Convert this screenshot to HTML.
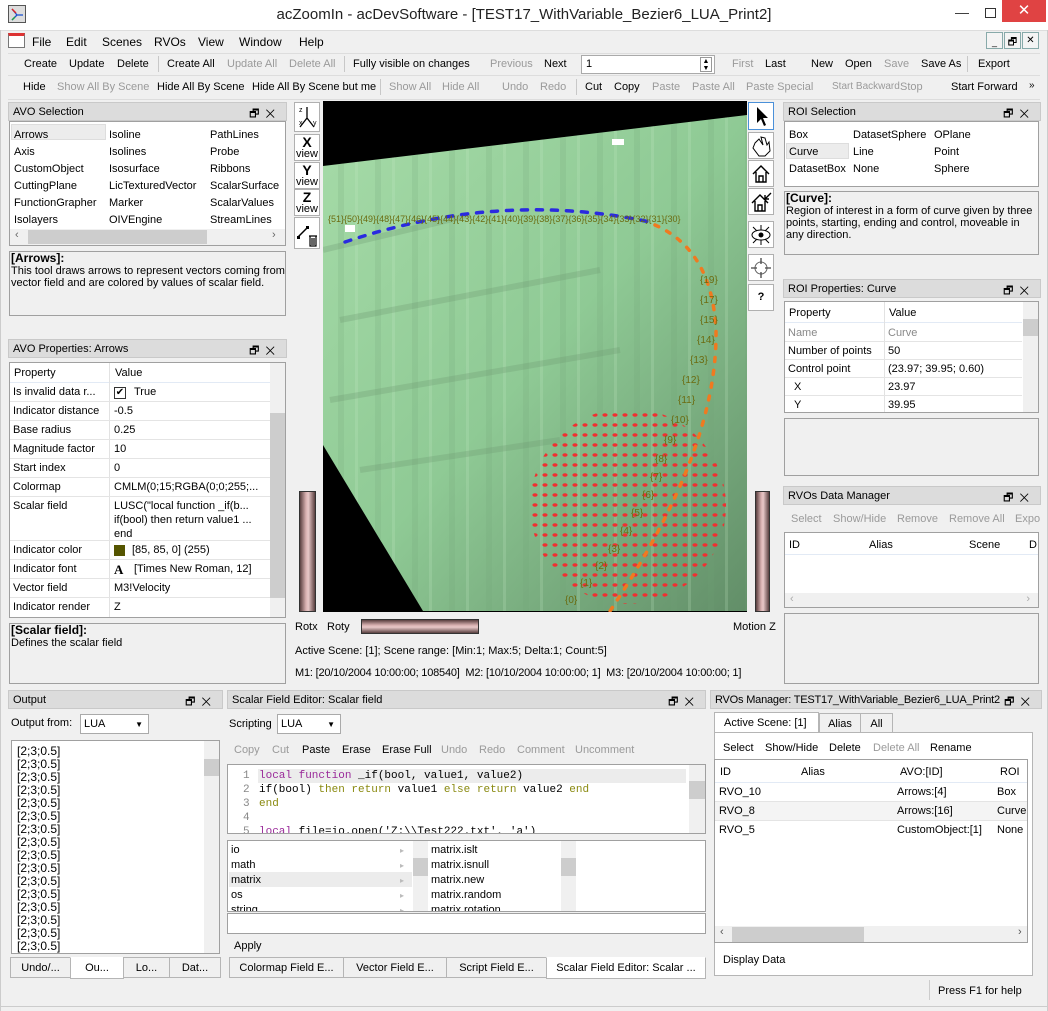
<!DOCTYPE html>
<html><head><meta charset="utf-8"><style>
*{box-sizing:border-box;margin:0;padding:0}
body{width:1048px;height:1011px;overflow:hidden;background:#f0f0f0;font-family:"Liberation Sans",sans-serif;font-size:11px;color:#000;position:relative}
.a{position:absolute;white-space:nowrap}
.g{color:#9a9a9a}
.hd{position:absolute;height:19px;background:#dcdcdc;border:1px solid #c9c9c9;padding:3px 4px;font-size:11px;white-space:nowrap;overflow:hidden}
.hd .ic{position:absolute;right:5px;top:2px;font-size:11px;letter-spacing:6px;background:#dcdcdc}
.bx{position:absolute;background:#fff;border:1px solid #a0a0a0}
.gb{position:absolute;background:#f0f0f0;border:1px solid #a0a0a0}
.btn{position:absolute;width:26px;height:28px;background:#fff;border:1px solid #b0b0b0}
.tab{position:absolute;height:21px;border:1px solid #b5b5b5;background:#f0f0f0;text-align:center;padding-top:4px;white-space:nowrap;overflow:hidden}
.sep{position:absolute;width:1px;height:16px;background:#c8c8c8}
</style></head><body>
<div class="a" style="left:0;top:0;width:1048px;height:30px;background:#fff"></div>
<div class="a" style="left:8px;top:5px;width:18px;height:18px;border:1px solid #555;background:#ddd"></div>
<svg class="a" style="left:9px;top:6px" width="16" height="16"><path d="M3 3 L8 9 L14 9 M8 9 L3 14" stroke="#1a4fd0" stroke-width="1.3" fill="none"/><path d="M3 3 L7 7" stroke="#e02020" stroke-width="1.3"/><path d="M3 14 L6 11" stroke="#20a040" stroke-width="1.3"/></svg>
<div class="a" style="left:0;width:1048px;top:6px;text-align:center;font-size:15px;color:#222">acZoomIn - acDevSoftware - [TEST17_WithVariable_Bezier6_LUA_Print2]</div>
<div class="a" style="left:955px;top:4px;font-size:14px;color:#333">—</div>
<div class="a" style="left:985px;top:8px;width:11px;height:10px;border:1px solid #333"></div>
<div class="a" style="left:1002px;top:0;width:44px;height:22px;background:#e04343;color:#fff;text-align:center;font-size:15px;padding-top:1px">✕</div>
<div class="a" style="left:0;top:30px;width:1048px;height:1px;background:#ddd"></div>
<div class="a" style="left:8px;top:33px;width:17px;height:15px;background:#fff;border:1px solid #777;border-top:3px solid #d33"></div>
<div class="a" style="left:32px;top:35px;font-size:12px">File</div><div class="a" style="left:66px;top:35px;font-size:12px">Edit</div><div class="a" style="left:102px;top:35px;font-size:12px">Scenes</div><div class="a" style="left:154px;top:35px;font-size:12px">RVOs</div><div class="a" style="left:198px;top:35px;font-size:12px">View</div><div class="a" style="left:239px;top:35px;font-size:12px">Window</div><div class="a" style="left:299px;top:35px;font-size:12px">Help</div>
<div class="a" style="left:986px;top:32px;width:17px;height:17px;border:1px solid #8aa;background:#f4f4f4;font-size:9px;text-align:center;padding-top:4px">_</div>
<div class="a" style="left:1004px;top:32px;width:17px;height:17px;border:1px solid #8aa;background:#f4f4f4;font-size:10px;text-align:center;padding-top:2px">🗗</div>
<div class="a" style="left:1022px;top:32px;width:17px;height:17px;border:1px solid #8aa;background:#f4f4f4;font-size:10px;text-align:center;padding-top:2px">✕</div>
<div class="a" style="left:8px;top:53px;width:1032px;height:1px;background:#ddd"></div>
<div class="a" style="left:24px;top:58px">Create</div><div class="a" style="left:69px;top:58px">Update</div><div class="a" style="left:117px;top:58px">Delete</div><div class="sep" style="left:158px;top:56px"></div>
<div class="a" style="left:167px;top:58px">Create All</div><div class="a g" style="left:227px;top:58px">Update All</div><div class="a g" style="left:289px;top:58px">Delete All</div><div class="sep" style="left:344px;top:56px"></div>
<div class="a" style="left:353px;top:58px">Fully visible on changes</div>
<div class="a g" style="left:490px;top:58px">Previous</div><div class="a" style="left:544px;top:58px">Next</div>
<div class="a" style="left:581px;top:55px;width:134px;height:19px;background:#fff;border:1px solid #aaa;padding:2px 4px">1</div>
<div class="a" style="left:700px;top:57px;width:12px;height:15px;border:1px solid #999;font-size:7px;line-height:7px;text-align:center">▲<br>▼</div>
<div class="a g" style="left:732px;top:58px">First</div><div class="a" style="left:765px;top:58px">Last</div>
<div class="a" style="left:811px;top:58px">New</div><div class="a" style="left:845px;top:58px">Open</div><div class="a g" style="left:884px;top:58px">Save</div><div class="a" style="left:921px;top:58px">Save As</div><div class="sep" style="left:967px;top:56px"></div><div class="a" style="left:978px;top:58px">Export</div>
<div class="a" style="left:8px;top:75px;width:1032px;height:1px;background:#ddd"></div>
<div class="a" style="left:23px;top:81px">Hide</div><div class="a g" style="left:57px;top:81px">Show All By Scene</div><div class="a" style="left:157px;top:81px">Hide All By Scene</div><div class="a" style="left:252px;top:81px">Hide All By Scene but me</div><div class="sep" style="left:380px;top:79px"></div>
<div class="a g" style="left:389px;top:81px">Show All</div><div class="a g" style="left:442px;top:81px">Hide All</div>
<div class="a g" style="left:502px;top:81px">Undo</div><div class="a g" style="left:540px;top:81px">Redo</div><div class="sep" style="left:576px;top:79px"></div>
<div class="a" style="left:585px;top:81px">Cut</div><div class="a" style="left:614px;top:81px">Copy</div><div class="a g" style="left:652px;top:81px">Paste</div><div class="a g" style="left:692px;top:81px">Paste All</div><div class="a g" style="left:746px;top:81px">Paste Special</div>
<div class="a g" style="left:832px;top:81px;font-size:10px">Start Backward</div><div class="a g" style="left:900px;top:81px">Stop</div><div class="a" style="left:951px;top:81px">Start Forward</div><div class="a" style="left:1029px;top:80px;font-size:10px">»</div>
<div class="a" style="left:8px;top:99px;width:1032px;height:1px;background:#ddd"></div>

<div class="hd" style="left:8px;top:102px;width:279px">AVO Selection<span class="ic">🗗✕</span></div>
<div class="bx" style="left:9px;top:121px;width:277px;height:125px"></div>
<div class="a" style="left:11px;top:124px;width:95px;height:16px;background:#ececec;border:1px solid #ddd"></div>
<div class="a" style="left:14px;top:127px;line-height:17px">Arrows<br>Axis<br>CustomObject<br>CuttingPlane<br>FunctionGrapher<br>Isolayers</div>
<div class="a" style="left:109px;top:127px;line-height:17px">Isoline<br>Isolines<br>Isosurface<br>LicTexturedVector<br>Marker<br>OIVEngine</div>
<div class="a" style="left:210px;top:127px;line-height:17px">PathLines<br>Probe<br>Ribbons<br>ScalarSurface<br>ScalarValues<br>StreamLines</div>
<div class="a" style="left:10px;top:229px;width:275px;height:16px;background:#f0f0f0"></div>
<div class="a" style="left:28px;top:230px;width:179px;height:14px;background:#cdcdcd"></div>
<div class="a" style="left:15px;top:229px;color:#666">‹</div><div class="a" style="left:272px;top:229px;color:#666">›</div>
<div class="gb" style="left:9px;top:251px;width:277px;height:65px;padding:0 0 0 1px;line-height:12px;font-size:11px"><b style="font-size:12px">[Arrows]:</b><br>This tool draws arrows to represent vectors coming from vector field and are colored by values of scalar field.</div>

<div class="hd" style="left:8px;top:339px;width:279px">AVO Properties: Arrows<span class="ic">🗗✕</span></div>
<div class="bx" style="left:9px;top:362px;width:277px;height:256px;overflow:hidden">
 <div class="a" style="left:0;top:0;width:260px;height:20px;border-bottom:1px solid #e2eaf5"><span class="a" style="left:4px;top:4px">Property</span><span class="a" style="left:105px;top:4px">Value</span></div>
 <div class="a" style="left:99px;top:0;width:1px;height:256px;background:#e2e2e2"></div>
 <div class="a" style="left:0;top:20px;width:260px;line-height:19px">
  <div style="height:19px;border-bottom:1px solid #e4e4e4;padding-left:3px;position:relative">Is invalid data r...<span class="a" style="left:104px;top:4px;width:12px;height:12px;border:1px solid #333;font-size:10px;line-height:10px;text-align:center">✔</span><span class="a" style="left:124px;top:0">True</span></div>
  <div style="height:19px;border-bottom:1px solid #e4e4e4;padding-left:3px;position:relative">Indicator distance<span class="a" style="left:104px">-0.5</span></div>
  <div style="height:19px;border-bottom:1px solid #e4e4e4;padding-left:3px;position:relative">Base radius<span class="a" style="left:104px">0.25</span></div>
  <div style="height:19px;border-bottom:1px solid #e4e4e4;padding-left:3px;position:relative">Magnitude factor<span class="a" style="left:104px">10</span></div>
  <div style="height:19px;border-bottom:1px solid #e4e4e4;padding-left:3px;position:relative">Start index<span class="a" style="left:104px">0</span></div>
  <div style="height:19px;border-bottom:1px solid #e4e4e4;padding-left:3px;position:relative">Colormap<span class="a" style="left:104px">CMLM(0;15;RGBA(0;0;255;...</span></div>
  <div style="height:44px;border-bottom:1px solid #e4e4e4;padding-left:3px;position:relative;line-height:14px;padding-top:2px">Scalar field<span class="a" style="left:104px;top:2px">LUSC("local function _if(b...<br>if(bool) then return value1 ...<br>end</span></div>
  <div style="height:19px;border-bottom:1px solid #e4e4e4;padding-left:3px;position:relative">Indicator color<span class="a" style="left:104px;top:4px;width:11px;height:11px;background:#555500"></span><span class="a" style="left:122px">[85, 85, 0] (255)</span></div>
  <div style="height:19px;border-bottom:1px solid #e4e4e4;padding-left:3px;position:relative">Indicator font<span class="a" style="left:104px;font-family:'Liberation Serif',serif;font-weight:bold;font-size:13px">A</span><span class="a" style="left:124px">[Times New Roman, 12]</span></div>
  <div style="height:19px;border-bottom:1px solid #e4e4e4;padding-left:3px;position:relative">Vector field<span class="a" style="left:104px">M3!Velocity</span></div>
  <div style="height:19px;padding-left:3px;position:relative">Indicator render<span class="a" style="left:104px">Z</span></div>
 </div>
 <div class="a" style="left:260px;top:0;width:16px;height:256px;background:#f0f0f0"></div>
 <div class="a" style="left:260px;top:50px;width:16px;height:185px;background:#cdcdcd"></div>
</div>
<div class="gb" style="left:9px;top:623px;width:277px;height:61px;padding-left:1px;line-height:12px;font-size:11px"><b style="font-size:12px">[Scalar field]:</b><br>Defines the scalar field</div>

<div class="btn" style="left:294px;top:102px;height:30px"><svg width="24" height="28"><text x="4" y="9" font-size="7" font-family="Liberation Sans">z</text><text x="4" y="22" font-size="7">x</text><text x="18" y="22" font-size="7">y</text><path d="M12 4V15L5 24M12 15L19 24" stroke="#000" stroke-width="1.3" fill="none"/></svg></div>
<div class="btn" style="left:294px;top:134px;height:27px;text-align:center;line-height:10px;font-size:11px;padding-top:2px"><b style="font-size:14px">X</b><br>view</div>
<div class="btn" style="left:294px;top:162px;height:27px;text-align:center;line-height:10px;font-size:11px;padding-top:2px"><b style="font-size:14px">Y</b><br>view</div>
<div class="btn" style="left:294px;top:189px;height:27px;text-align:center;line-height:10px;font-size:11px;padding-top:2px"><b style="font-size:14px">Z</b><br>view</div>
<div class="btn" style="left:294px;top:217px;height:32px"><svg width="24" height="30"><path d="M3 19L12 10" stroke="#000" stroke-width="1.5"/><rect x="2" y="18" width="3" height="3"/><rect x="11" y="8" width="3" height="3"/><path d="M14 18h8M15 18v10h6v-10M17 20v7M19 20v7" stroke="#000" fill="none" stroke-width="1.2"/></svg></div>
<div class="a" style="left:299px;top:491px;width:17px;height:121px;background:linear-gradient(90deg,#5a4040,#d8b0b0 40%,#e8c8c8 55%,#5a4040);border:1px solid #333"></div>

<svg class="a" style="left:323px;top:101px" width="424" height="511" viewBox="323 101 424 511">
<defs>
<linearGradient id="gg" x1="0" y1="0" x2="1" y2="1"><stop offset="0" stop-color="#a6dba8"/><stop offset="0.5" stop-color="#8fca95"/><stop offset="1" stop-color="#628e68"/></linearGradient>
<pattern id="st" width="37" height="511" patternUnits="userSpaceOnUse"><rect x="5" width="6" height="511" fill="#6f9f73" opacity=".18"/><rect x="22" width="3" height="511" fill="#c6ecc6" opacity=".2"/></pattern>
<pattern id="rd" width="10" height="10" patternUnits="userSpaceOnUse"><ellipse cx="5" cy="5" rx="2.6" ry="1.7" fill="#ef3030"/></pattern>
</defs>
<rect x="323" y="101" width="424" height="511" fill="#000"/>
<polygon points="323,166 747,115 747,611 423,611 323,445" fill="url(#gg)"/>
<polygon points="323,166 747,115 747,611 423,611 323,445" fill="url(#st)"/>
<path d="M323 250 L470 215 M340 320 L600 270 M330 400 L620 350 M360 470 L560 440" stroke="#6f9a72" stroke-width="6" opacity=".3"/>
<circle cx="628" cy="506" r="98" fill="url(#rd)"/>
<path d="M345 242 Q500 190 650 222" stroke="#2a2ae0" stroke-width="3.5" stroke-dasharray="6 9" stroke-linecap="round" fill="none"/>
<path d="M655 225 Q712 250 716 330 Q718 450 610 611" stroke="#ef7a20" stroke-width="3.5" stroke-dasharray="4 9" stroke-linecap="round" fill="none"/>
<text font-size="9" fill="#6b6b10" font-family="Liberation Sans"><tspan x="328" y="222">{51}{50}{49}{48}{47}{46}{45}{44}{43}{42}{41}{40}{39}{38}{37}{36}{35}{34}{33}{32}{31}{30}</tspan></text>
<text font-size="10" fill="#6b6b10" font-family="Liberation Sans"><tspan x="700" y="283">{19}</tspan><tspan x="700" y="303">{17}</tspan><tspan x="700" y="323">{15}</tspan><tspan x="697" y="343">{14}</tspan><tspan x="690" y="363">{13}</tspan><tspan x="682" y="383">{12}</tspan><tspan x="678" y="403">{11}</tspan><tspan x="671" y="423">{10}</tspan><tspan x="664" y="443">{9}</tspan><tspan x="655" y="462">{8}</tspan><tspan x="650" y="480">{7}</tspan><tspan x="642" y="498">{6}</tspan><tspan x="631" y="516">{5}</tspan><tspan x="620" y="534">{4}</tspan><tspan x="608" y="552">{3}</tspan><tspan x="595" y="569">{2}</tspan><tspan x="580" y="586">{1}</tspan><tspan x="565" y="603">{0}</tspan></text>
<rect x="612" y="139" width="12" height="6" fill="#fff"/>
<rect x="345" y="225" width="10" height="7" fill="#fff"/>
</svg>

<div class="btn" style="left:748px;top:102px;height:28px;border-color:#4a90d9"><svg width="24" height="26"><path d="M8 4V20L12 16L15 23L17 22L14 15H19Z" fill="#000"/></svg></div>
<div class="btn" style="left:748px;top:132px;height:27px"><svg width="24" height="26"><path d="M6 10L10 6L14 12L12 4L16 5L18 12L20 9L21 18L16 23H10L4 15Z" stroke="#000" fill="none"/></svg></div>
<div class="btn" style="left:748px;top:160px;height:27px"><svg width="24" height="26"><path d="M4 13L12 5L20 13M7 11V21H17V11M10 21V15H14V21" stroke="#000" stroke-width="1.4" fill="none"/></svg></div>
<div class="btn" style="left:748px;top:188px;height:27px"><svg width="24" height="26"><path d="M3 14L11 6L19 14M6 12V22H16V12M9 22V16H13V22M16 10L22 4M16 10H20M16 10V6" stroke="#000" stroke-width="1.4" fill="none"/></svg></div>
<div class="btn" style="left:748px;top:221px;height:27px"><svg width="24" height="26"><ellipse cx="12" cy="13" rx="9" ry="5" stroke="#000" fill="none"/><circle cx="12" cy="13" r="2.5"/><path d="M4 5L8 9M12 3V8M20 5L16 9M4 21L8 17M12 23V18M20 21L16 17" stroke="#000"/></svg></div>
<div class="btn" style="left:748px;top:254px;height:27px"><svg width="24" height="26"><circle cx="12" cy="13" r="6" stroke="#666" fill="none"/><path d="M12 3V9M12 17V23M2 13H8M16 13H22" stroke="#444" stroke-width="1.3"/></svg></div>
<div class="btn" style="left:748px;top:284px;height:27px;text-align:center;font-weight:bold;font-size:11px;padding-top:6px">?</div>
<div class="a" style="left:755px;top:491px;width:15px;height:121px;background:linear-gradient(90deg,#5a4040,#d8b0b0 40%,#e8c8c8 55%,#5a4040);border:1px solid #333"></div>

<div class="a" style="left:295px;top:621px">Rotx</div><div class="a" style="left:327px;top:621px">Roty</div>
<div class="a" style="left:361px;top:619px;width:118px;height:15px;background:linear-gradient(#5a4040,#d8b0b0 40%,#e8c8c8 55%,#5a4040);border:1px solid #333"></div>
<div class="a" style="left:733px;top:621px">Motion Z</div>
<div class="a" style="left:295px;top:645px">Active Scene: [1]; Scene range: [Min:1; Max:5; Delta:1; Count:5]</div>
<div class="a" style="left:295px;top:667px;letter-spacing:-0.2px">M1: [20/10/2004 10:00:00; 108540]&nbsp; M2: [10/10/2004 10:00:00; 1]&nbsp; M3: [20/10/2004 10:00:00; 1]</div>

<div class="hd" style="left:783px;top:102px;width:258px">ROI Selection<span class="ic">🗗✕</span></div>
<div class="bx" style="left:784px;top:121px;width:255px;height:66px"></div>
<div class="a" style="left:786px;top:143px;width:63px;height:16px;background:#ececec;border:1px solid #ddd"></div>
<div class="a" style="left:789px;top:127px;line-height:17px">Box<br>Curve<br>DatasetBox</div>
<div class="a" style="left:853px;top:127px;line-height:17px">DatasetSphere<br>Line<br>None</div>
<div class="a" style="left:934px;top:127px;line-height:17px">OPlane<br>Point<br>Sphere</div>
<div class="gb" style="left:784px;top:191px;width:255px;height:64px;padding-left:1px;line-height:12px;font-size:11px"><b style="font-size:12px">[Curve]:</b><br>Region of interest in a form of curve given by three points, starting, ending and control, moveable in any direction.</div>

<div class="hd" style="left:783px;top:279px;width:258px">ROI Properties: Curve<span class="ic">🗗✕</span></div>
<div class="bx" style="left:784px;top:301px;width:255px;height:112px;overflow:hidden">
 <div class="a" style="left:0;top:0;width:237px;height:21px;border-bottom:1px solid #e2eaf5"><span class="a" style="left:4px;top:5px">Property</span><span class="a" style="left:104px;top:5px">Value</span></div>
 <div class="a" style="left:99px;top:0;width:1px;height:112px;background:#e2e2e2"></div>
 <div class="a" style="left:0;top:22px;width:237px;line-height:18px">
  <div style="height:18px;border-bottom:1px solid #e4e4e4;padding-left:3px;position:relative;color:#888">Name<span class="a" style="left:103px">Curve</span></div>
  <div style="height:18px;border-bottom:1px solid #e4e4e4;padding-left:3px;position:relative">Number of points<span class="a" style="left:103px">50</span></div>
  <div style="height:18px;border-bottom:1px solid #e4e4e4;padding-left:3px;position:relative">Control point<span class="a" style="left:103px">(23.97; 39.95; 0.60)</span></div>
  <div style="height:18px;border-bottom:1px solid #e4e4e4;padding-left:9px;position:relative">X<span class="a" style="left:103px">23.97</span></div>
  <div style="height:18px;padding-left:9px;position:relative">Y<span class="a" style="left:103px">39.95</span></div>
 </div>
 <div class="a" style="left:238px;top:0;width:16px;height:112px;background:#f0f0f0"></div>
 <div class="a" style="left:238px;top:17px;width:16px;height:17px;background:#cdcdcd"></div>
</div>
<div class="gb" style="left:784px;top:418px;width:255px;height:58px"></div>

<div class="hd" style="left:783px;top:486px;width:258px">RVOs Data Manager<span class="ic">🗗✕</span></div>
<div class="a g" style="left:791px;top:513px">Select</div><div class="a g" style="left:833px;top:513px">Show/Hide</div><div class="a g" style="left:897px;top:513px">Remove</div><div class="a g" style="left:949px;top:513px">Remove All</div><div class="a g" style="left:1015px;top:513px">Expo</div>
<div class="bx" style="left:784px;top:532px;width:255px;height:76px;overflow:hidden">
 <div class="a" style="left:0;top:0;width:255px;height:22px;border-bottom:1px solid #e2eaf5"><span class="a" style="left:4px;top:6px">ID</span><span class="a" style="left:84px;top:6px">Alias</span><span class="a" style="left:184px;top:6px">Scene</span><span class="a" style="left:244px;top:6px">D</span></div>
 <div class="a" style="left:0;top:60px;width:255px;height:16px;background:#f0f0f0;color:#aaa;padding-left:5px">‹<span style="position:absolute;right:10px">›</span></div>
</div>
<div class="gb" style="left:784px;top:613px;width:255px;height:71px"></div>

<div class="hd" style="left:8px;top:690px;width:215px">Output<span class="ic">🗗✕</span></div>
<div class="a" style="left:11px;top:717px">Output from:</div>
<div class="a" style="left:80px;top:714px;width:69px;height:20px;border:1px solid #aaa;background:#fff;padding:3px 3px">LUA<span style="position:absolute;right:5px;font-size:8px;top:5px">▼</span></div>
<div class="bx" style="left:11px;top:740px;width:209px;height:214px;overflow:hidden;padding:4px 0 0 5px;line-height:13px;font-size:12px">[2;3;0.5]<br>[2;3;0.5]<br>[2;3;0.5]<br>[2;3;0.5]<br>[2;3;0.5]<br>[2;3;0.5]<br>[2;3;0.5]<br>[2;3;0.5]<br>[2;3;0.5]<br>[2;3;0.5]<br>[2;3;0.5]<br>[2;3;0.5]<br>[2;3;0.5]<br>[2;3;0.5]<br>[2;3;0.5]<br>[2;3;0.5]
 <div class="a" style="left:192px;top:0;width:16px;height:214px;background:#f0f0f0"></div><div class="a" style="left:192px;top:18px;width:16px;height:17px;background:#cdcdcd"></div></div>
<div class="tab" style="left:10px;top:957px;width:61px">Undo/...</div>
<div class="tab" style="left:70px;top:957px;width:54px;background:#fff;border-top-color:#fff;height:22px">Ou...</div>
<div class="tab" style="left:123px;top:957px;width:47px">Lo...</div>
<div class="tab" style="left:169px;top:957px;width:52px">Dat...</div>

<div class="hd" style="left:227px;top:690px;width:479px">Scalar Field Editor: Scalar field<span class="ic">🗗✕</span></div>
<div class="a" style="left:229px;top:718px">Scripting</div>
<div class="a" style="left:277px;top:714px;width:64px;height:20px;border:1px solid #aaa;background:#fff;padding:3px 3px">LUA<span style="position:absolute;right:5px;font-size:8px;top:5px">▼</span></div>
<div class="a g" style="left:234px;top:744px">Copy</div><div class="a g" style="left:272px;top:744px">Cut</div><div class="a" style="left:302px;top:744px">Paste</div><div class="a" style="left:342px;top:744px">Erase</div><div class="a" style="left:382px;top:744px">Erase Full</div><div class="a g" style="left:441px;top:744px">Undo</div><div class="a g" style="left:479px;top:744px">Redo</div><div class="a g" style="left:517px;top:744px">Comment</div><div class="a g" style="left:575px;top:744px">Uncomment</div>
<div class="bx" style="left:227px;top:764px;width:479px;height:70px;overflow:hidden;font-family:'Liberation Mono',monospace;font-size:11px;line-height:14px">
 <div class="a" style="left:30px;top:4px;width:428px;height:14px;background:#ececec"></div>
 <div class="a" style="left:15px;top:4px;color:#888">1<br>2<br>3<br>4<br>5</div>
 <div class="a" style="left:31px;top:4px"><span style="color:#9a2a9a">local function</span> _if(bool, value1, value2)<br>if(bool) <span style="color:#8a8a10">then return</span> value1 <span style="color:#8a8a10">else return</span> value2 <span style="color:#8a8a10">end</span><br><span style="color:#8a8a10">end</span><br><br><span style="color:#9a2a9a">local</span> file=io.open('Z:\\Test222.txt', 'a')</div>
 <div class="a" style="left:461px;top:0;width:17px;height:70px;background:#f0f0f0"></div><div class="a" style="left:461px;top:16px;width:17px;height:18px;background:#cdcdcd"></div>
</div>
<div class="bx" style="left:227px;top:840px;width:479px;height:72px;overflow:hidden;line-height:15px">
 <div class="a" style="left:1px;top:31px;width:183px;height:15px;background:#ececec"></div>
 <div class="a" style="left:3px;top:2px">io<br>math<br>matrix<br>os<br>string</div>
 <div class="a" style="left:172px;top:2px;color:#bbb;font-size:8px;line-height:15px">▸<br>▸<br>▸<br>▸<br>▸</div>
 <div class="a" style="left:185px;top:0;width:15px;height:72px;background:#f0f0f0"></div><div class="a" style="left:185px;top:17px;width:15px;height:18px;background:#cdcdcd"></div>
 <div class="a" style="left:203px;top:2px">matrix.islt<br>matrix.isnull<br>matrix.new<br>matrix.random<br>matrix.rotation</div>
 <div class="a" style="left:333px;top:0;width:15px;height:72px;background:#f0f0f0"></div><div class="a" style="left:333px;top:17px;width:15px;height:18px;background:#cdcdcd"></div>
</div>
<div class="bx" style="left:227px;top:913px;width:479px;height:21px"></div>
<div class="a" style="left:234px;top:940px">Apply</div>
<div class="tab" style="left:229px;top:957px;width:115px">Colormap Field E...</div>
<div class="tab" style="left:343px;top:957px;width:104px">Vector Field E...</div>
<div class="tab" style="left:446px;top:957px;width:101px">Script Field E...</div>
<div class="tab" style="left:546px;top:957px;width:160px;background:#fff;border-top-color:#fff;height:22px">Scalar Field Editor: Scalar ...</div>

<div class="hd" style="left:710px;top:690px;width:332px;letter-spacing:-0.2px">RVOs Manager: TEST17_WithVariable_Bezier6_LUA_Print2<span class="ic" style="letter-spacing:6px">🗗✕</span></div>
<div class="tab" style="left:714px;top:712px;width:105px;background:#fff;border-bottom:none;height:21px;text-align:left;padding-left:9px">Active Scene: [1]</div>
<div class="tab" style="left:819px;top:713px;width:42px">Alias</div>
<div class="tab" style="left:860px;top:713px;width:33px">All</div>
<div class="a" style="left:714px;top:732px;width:319px;height:244px;background:#fff;border:1px solid #b5b5b5"></div>
<div class="a" style="left:723px;top:742px">Select</div><div class="a" style="left:765px;top:742px">Show/Hide</div><div class="a" style="left:829px;top:742px">Delete</div><div class="a g" style="left:873px;top:742px">Delete All</div><div class="a" style="left:930px;top:742px">Rename</div>
<div class="bx" style="left:714px;top:759px;width:314px;height:184px;overflow:hidden">
 <div class="a" style="left:0;top:0;width:314px;height:23px;border-bottom:1px solid #e2eaf5"><span class="a" style="left:5px;top:6px">ID</span><span class="a" style="left:86px;top:6px">Alias</span><span class="a" style="left:185px;top:6px">AVO:[ID]</span><span class="a" style="left:285px;top:6px">ROI</span></div>
 <div class="a" style="left:0;top:23px;width:314px;height:19px;border-bottom:1px solid #e4e4e4"><span class="a" style="left:4px;top:3px">RVO_10</span><span class="a" style="left:182px;top:3px">Arrows:[4]</span><span class="a" style="left:282px;top:3px">Box</span></div>
 <div class="a" style="left:0;top:42px;width:314px;height:19px;background:#f4f4f4;border-bottom:1px solid #e4e4e4"><span class="a" style="left:4px;top:3px">RVO_8</span><span class="a" style="left:182px;top:3px">Arrows:[16]</span><span class="a" style="left:282px;top:3px">Curve</span></div>
 <div class="a" style="left:0;top:61px;width:314px;height:19px"><span class="a" style="left:4px;top:3px">RVO_5</span><span class="a" style="left:182px;top:3px">CustomObject:[1]</span><span class="a" style="left:282px;top:3px">None</span></div>
 <div class="a" style="left:0;top:166px;width:314px;height:17px;background:#f0f0f0"></div><div class="a" style="left:17px;top:167px;width:132px;height:15px;background:#cdcdcd"></div>
 <div class="a" style="left:5px;top:166px;color:#555">‹</div><div class="a" style="left:303px;top:166px;color:#555">›</div>
</div>
<div class="a" style="left:723px;top:954px">Display Data</div>

<div class="a" style="left:929px;top:980px;width:1px;height:20px;background:#ccc"></div>
<div class="a" style="left:938px;top:985px">Press F1 for help</div>
<div class="a" style="left:0;top:1006px;width:1048px;height:5px;border-top:1px solid #ccc;background:#f0f0f0"></div>
<div class="a" style="left:0;top:30px;width:1px;height:981px;background:#ccc"></div>
<div class="a" style="left:1047px;top:30px;width:1px;height:981px;background:#ccc"></div>
</body></html>
